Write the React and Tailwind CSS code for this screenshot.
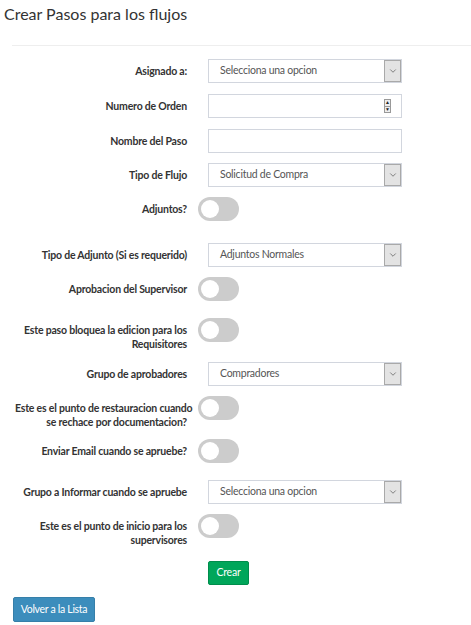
import { ChevronDown } from "lucide-react";

const font = { fontFamily: "Lato, 'Open Sans', sans-serif" };

function Label({ children }) {
  return (
    <div className="w-[172px] shrink-0 whitespace-nowrap text-right text-[10.5px] font-bold leading-[14px] tracking-[-0.2px] text-[#333]">
      {children}
    </div>
  );
}

function SelectBox({ value }) {
  return (
    <div className="flex h-[24px] w-[194px] items-center border border-[#d2d6de] bg-white">
      <span className="flex-1 pl-[11px] text-[10.5px] tracking-[-0.25px] text-[#555]">{value}</span>
      <span className="flex h-[22px] w-[17px] items-center justify-center border border-[#a9a9a9] bg-[#e3e3e3]">
        <ChevronDown size={10} strokeWidth={1.5} className="text-[#444]" />
      </span>
    </div>
  );
}

function NumberBox() {
  return (
    <div className="flex h-[24px] w-[194px] items-center justify-end border border-[#d2d6de] bg-white pr-[10px]">
      <div className="flex h-[14px] w-[7px] flex-col border border-[#999] bg-[#eee]">
        <span className="flex flex-1 items-center justify-center text-[5px] leading-none text-[#222]">▲</span>
        <span className="flex flex-1 items-center justify-center border-t border-[#999] text-[5px] leading-none text-[#222]">▼</span>
      </div>
    </div>
  );
}

function TextBox() {
  return <div className="h-[24px] w-[194px] border border-[#d2d6de] bg-white" />;
}

function Toggle() {
  return (
    <div className="relative h-[24px] w-[41px] shrink-0 rounded-full bg-[#ccc]">
      <span className="absolute left-[3px] top-[3px] h-[18px] w-[18px] rounded-full bg-white" />
    </div>
  );
}

function InputRow({ label, children, mb = "mb-[11px]" }) {
  return (
    <div className={`flex items-center gap-[21px] ${mb}`}>
      <Label>{label}</Label>
      {children}
    </div>
  );
}

function ToggleRow({ label, h = "h-[32px]" }) {
  return (
    <div className={`flex items-start gap-[11px] ${h} mb-[10px]`}>
      <div className="pt-[5px]">
        <Label>{label}</Label>
      </div>
      <Toggle />
    </div>
  );
}

export default function App() {
  return (
    <div className="min-h-[625px] w-[471px] bg-white" style={font}>
      <h1 className="pl-[4px] pt-[3px] text-[16px] leading-[22px] text-[#333]">
        Crear Pasos para los flujos
      </h1>
      <div className="ml-[12px] mt-[20px] border-t border-[#eee]" />

      <div className="pl-[15px] pt-[13px]">
        <InputRow label="Asignado a:">
          <SelectBox value="Selecciona una opcion" />
        </InputRow>
        <InputRow label="Numero de Orden">
          <NumberBox />
        </InputRow>
        <InputRow label="Nombre del Paso" mb="mb-[10px]">
          <TextBox />
        </InputRow>
        <InputRow label="Tipo de Flujo" mb="mb-[10px]">
          <SelectBox value="Solicitud de Compra" />
        </InputRow>
        <ToggleRow label="Adjuntos?" h="h-[36px]" />
        <InputRow label="Tipo de Adjunto (Si es requerido)" mb="mb-[10px]">
          <SelectBox value="Adjuntos Normales" />
        </InputRow>
        <ToggleRow label="Aprobacion del Supervisor" h="h-[31px]" />
        <ToggleRow
          label={
            <>
              Este paso bloquea la edicion para los
              <br />
              Requisitores
            </>
          }
          h="h-[34px]"
        />
        <InputRow label="Grupo de aprobadores" mb="mb-[10px]">
          <SelectBox value="Compradores" />
        </InputRow>
        <ToggleRow
          label={
            <>
              Este es el punto de restauracion cuando
              <br />
              se rechace por documentacion?
            </>
          }
          h="h-[33px]"
        />
        <ToggleRow label="Enviar Email cuando se apruebe?" h="h-[31px]" />
        <InputRow label="Grupo a Informar cuando se apruebe" mb="mb-[10px]">
          <SelectBox value="Selecciona una opcion" />
        </InputRow>
        <ToggleRow
          label={
            <>
              Este es el punto de inicio para los
              <br />
              supervisores
            </>
          }
          h="h-[34px]"
        />
        <div className="mb-[10px] pl-[193px]">
          <button className="h-[24px] w-[41px] rounded-[2px] border border-[#008d4c] bg-[#00a65a] text-[10.5px] tracking-[-0.2px] text-white">
            Crear
          </button>
        </div>
      </div>

      <div className="pl-[13px]">
        <button className="h-[25px] w-[82px] rounded-[2px] border border-[#367fa9] bg-[#3c8dbc] text-[10.5px] tracking-[-0.3px] text-white">
          Volver a la Lista
        </button>
      </div>
    </div>
  );
}
